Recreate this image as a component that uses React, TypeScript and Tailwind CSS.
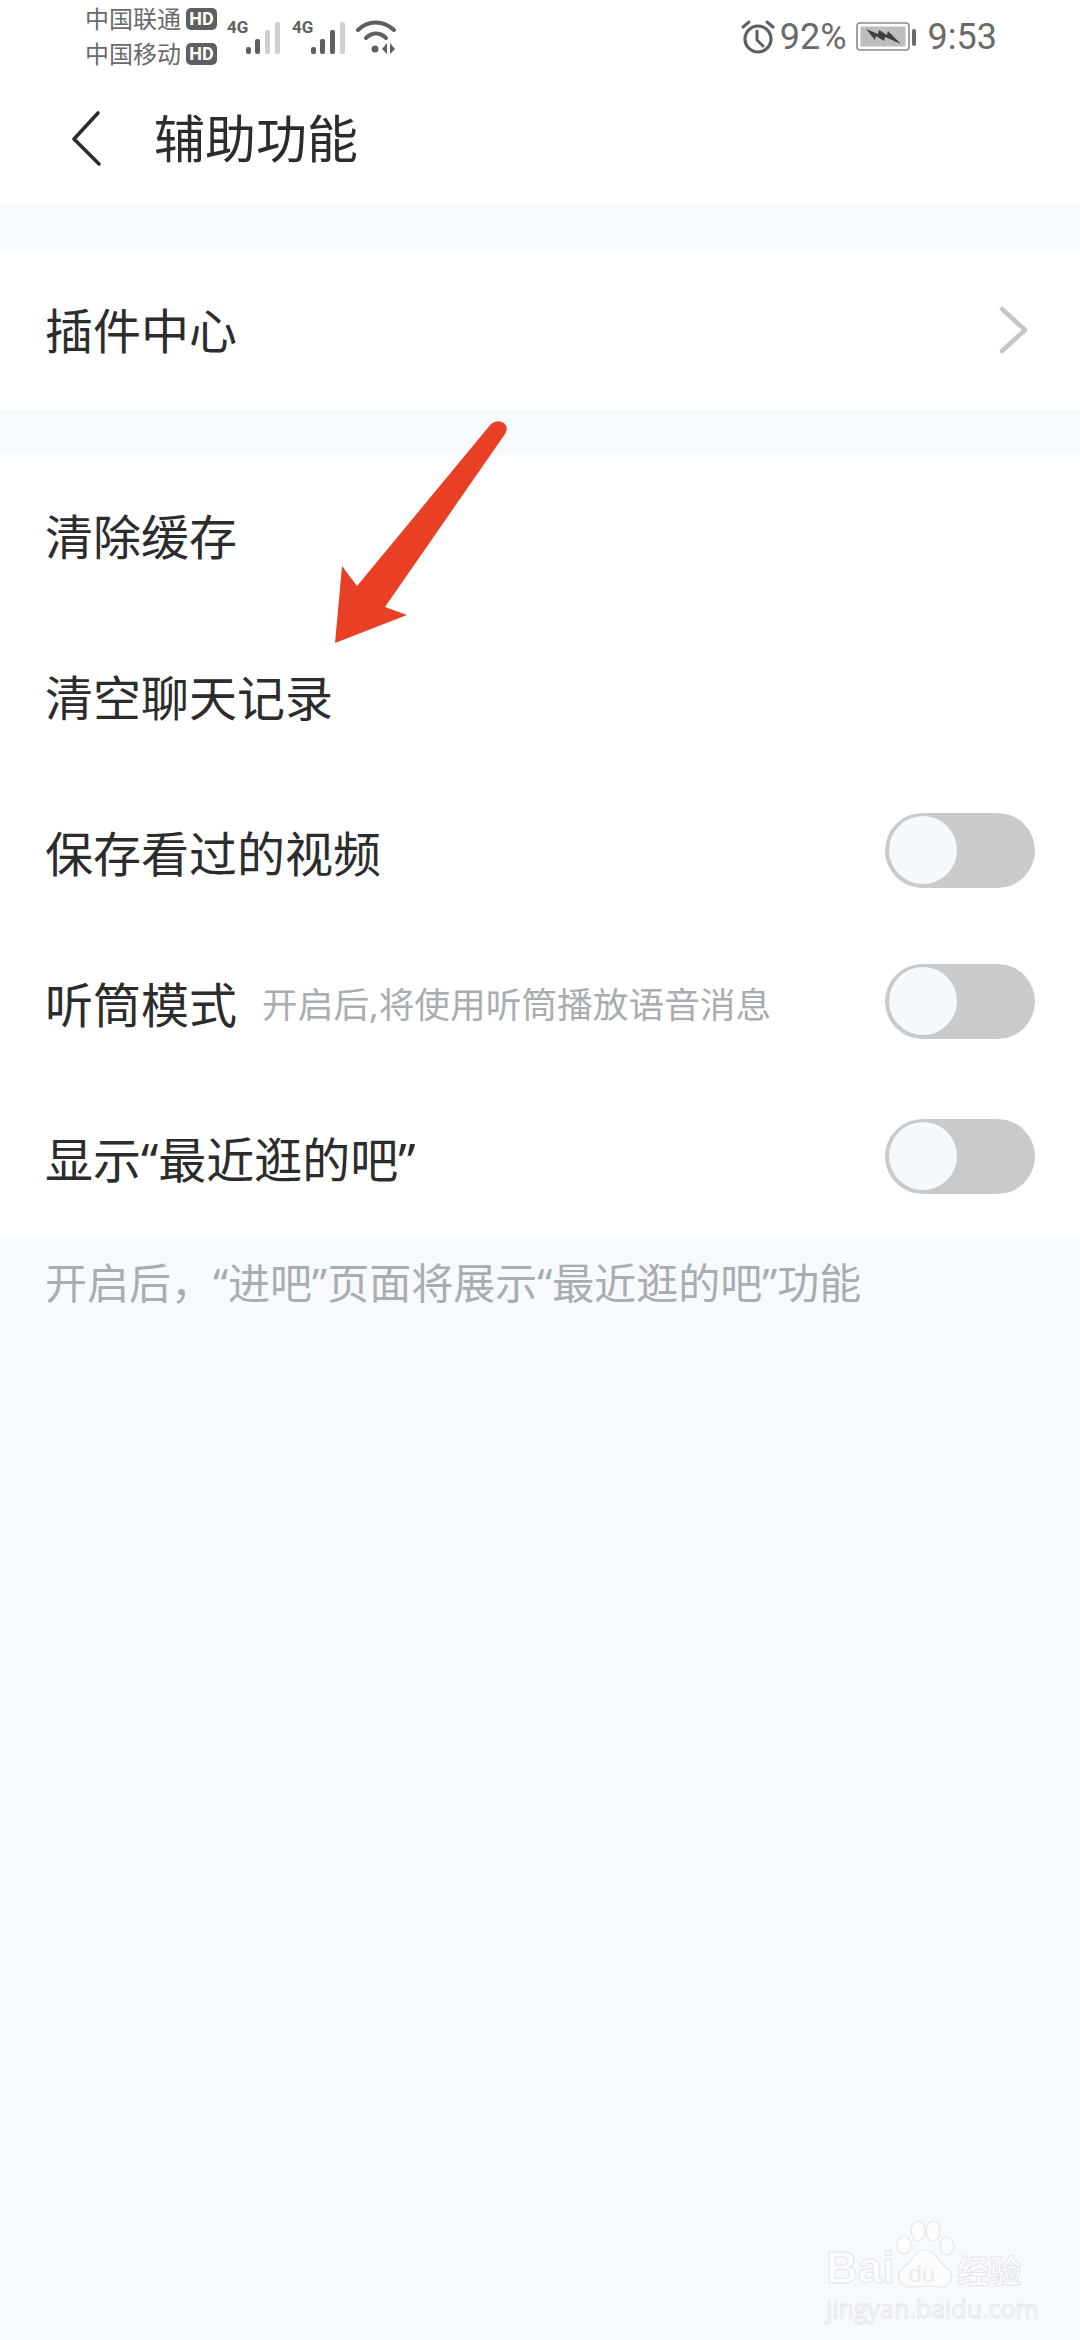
const cjk = "font-['Noto_Sans','Noto_Sans_CJK_SC',sans-serif]";

// --- status bar icons ---

const Signal = ({ active }: { active: number }) => (
  <svg width="36" height="34" viewBox="0 0 36 34" className="block">
    {[
      { x: 1, y: 26, h: 7 },
      { x: 10, y: 18, h: 15 },
      { x: 20, y: 9, h: 24 },
      { x: 30, y: 1, h: 32 },
    ].map((b, i) => (
      <rect key={i} x={b.x} y={b.y} width="5" height={b.h} rx="2" fill={i < active ? "#5f5f5f" : "#cfcfcf"} />
    ))}
  </svg>
);

const Wifi = () => (
  <svg width="40" height="34" viewBox="0 0 40 34" className="block">
    <path d="M2 10C12 0 27 0 38 10" fill="none" stroke="#5f5f5f" strokeWidth="4" strokeLinecap="round" />
    <path d="M10 18C16 12 24 12 30 18" fill="none" stroke="#5f5f5f" strokeWidth="4" strokeLinecap="round" />
    <circle cx="19" cy="29" r="3.5" fill="#5f5f5f" />
    <path d="M31 23l-5 6 5 5zM34 23l5 6-5 5z" fill="#5f5f5f" />
  </svg>
);

const Alarm = () => (
  <svg width="34" height="34" viewBox="0 0 34 34" className="block">
    <circle cx="17" cy="19" r="13" fill="none" stroke="#5f5f5f" strokeWidth="3.2" />
    <path d="M16 11v9l6 6" fill="none" stroke="#5f5f5f" strokeWidth="3" strokeLinecap="round" />
    <path d="M2 7l6-5M32 7l-6-5" fill="none" stroke="#5f5f5f" strokeWidth="3" strokeLinecap="round" />
  </svg>
);

const Battery = () => (
  <svg width="60" height="30" viewBox="0 0 60 30" className="block">
    <rect x="1" y="1" width="52" height="27" rx="3" fill="#fff" stroke="#8a8a8a" strokeWidth="1.6" />
    <rect x="4.5" y="4.5" width="45" height="20" fill="#bdbdbd" />
    <rect x="56" y="7" width="4" height="17" rx="2" fill="#6a6a6a" />
    <path d="M10 7l12 5 1-4 8 5 1-4 13 13-16-7-1 4-8-5-1 4z" fill="#3f3f3f" />
  </svg>
);

const HdBadge = () => (
  <span className="flex h-[22px] w-[31px] shrink-0 items-center justify-center rounded-[5px] bg-[#5f5f5f] font-['Roboto',sans-serif] text-[18px] leading-none font-bold text-white">
    HD
  </span>
);

const FourG = () => (
  <span className="mb-[19px] -mr-[2px] w-[20px] font-['Roboto',sans-serif] text-[17px] leading-none font-bold text-[#5f5f5f]">4G</span>
);

const Toggle = () => (
  <div className="flex h-[75px] w-[150px] items-center rounded-full bg-[#c8cacc] pl-[4px]">
    <div className="h-[68px] w-[68px] rounded-full bg-[#f6f9fc]" />
  </div>
);

const Row = ({ h, label, hint, toggle }: { h: string; label: string; hint?: string; toggle?: boolean }) => (
  <div className={`flex items-center justify-between pl-[45px] pr-[45px] ${h}`}>
    <div className="flex items-center pt-[7px]">
      <span className="text-[48px] leading-none text-[#2c2c2c]">{label}</span>
      {hint && <span className="ml-[25px] text-[35.7px] leading-none text-[#a9adb2]">{hint}</span>}
    </div>
    {toggle && <Toggle />}
  </div>
);

export default function App() {
  return (
    <div className={`relative h-[2340px] w-[1080px] overflow-hidden bg-[#f7fafd] ${cjk}`}>
      {/* header */}
      <div className="h-[204px] bg-white">
        <div className="flex h-[72px] items-start justify-between pt-[6px] pl-[85px] pr-[83px]">
          <div className="flex items-center">
            <div className="flex w-[132px] flex-col gap-[9px] text-[24px] leading-[26px] whitespace-nowrap text-[#6a6a6a]">
              <div className="flex items-center gap-[5px]">中国联通<HdBadge /></div>
              <div className="flex items-center gap-[5px]">中国移动<HdBadge /></div>
            </div>
            <div className="ml-[10px] flex items-end">
              <FourG />
              <Signal active={2} />
            </div>
            <div className="ml-[11px] flex items-end">
              <FourG />
              <Signal active={3} />
            </div>
            <div className="ml-[10px]">
              <Wifi />
            </div>
          </div>
          <div className="flex items-center pt-[13px] font-['Roboto',sans-serif] text-[36px] leading-none text-[#6a6a6a]">
            <Alarm />
            <span className="ml-[5px]">92%</span>
            <span className="ml-[9px]">
              <Battery />
            </span>
            <span className="ml-[12px]">9:53</span>
          </div>
        </div>
        <div className="flex h-[126px] items-start">
          <svg width="40" height="60" viewBox="0 0 40 60" className="mt-[36px] ml-[66px] block">
            <path d="M32 5L8 31l25 25" fill="none" stroke="#2c2c2c" strokeWidth="3.6" strokeLinecap="round" strokeLinejoin="round" />
          </svg>
          <span className="mt-[41px] ml-[48px] text-[51px] leading-none text-[#2c2c2c]">辅助功能</span>
        </div>
      </div>

      <div className="mt-[45px] flex h-[161px] items-center justify-between bg-white pl-[45px] pr-[50px]">
        <span className="pt-[2px] text-[48px] leading-none text-[#2c2c2c]">插件中心</span>
        <svg width="32" height="48" viewBox="0 0 32 48" className="block">
          <path d="M4 3l23 21L4 45" fill="none" stroke="#c2c5c9" strokeWidth="4.5" strokeLinecap="round" strokeLinejoin="round" />
        </svg>
      </div>

      <div className="mt-[45px] bg-white">
        <Row h="h-[156px]" label="清除缓存" />
        <Row h="h-[166px]" label="清空聊天记录" />
        <Row h="h-[146px]" label="保存看过的视频" toggle />
        <Row h="h-[156px]" label="听筒模式" hint="开启后,将使用听筒播放语音消息" toggle />
        <Row h="h-[158px] pb-[4px]" label="显示“最近逛的吧”" toggle />
      </div>

      <p className="mt-[23px] pl-[45px] text-[42px] leading-[46px] whitespace-nowrap text-[#a9adb2]">开启后，“进吧”页面将展示“最近逛的吧”功能</p>

      {/* annotation arrow */}
      <svg width="1080" height="700" viewBox="0 0 1080 700" className="absolute top-0 left-0 block">
        <path
          d="M335 643L342 566L357 586L491 424Q497 419 504 423Q509 428 505 434L385 607L407 615Z"
          fill="#e94025"
        />
      </svg>

      {/* watermark */}
      <div className="absolute top-[2220px] left-[826px] w-[200px]">
        <div className="flex h-[70px] items-end">
          <span className="font-['Liberation_Sans',sans-serif] text-[44px] leading-[44px] font-bold text-[#fbfcfd] [-webkit-text-stroke:1px_#e4e6e9]">Bai</span>
          <div className="relative -mb-[2px] h-[72px] w-[62px]">
            <svg width="62" height="72" viewBox="0 0 62 72" className="absolute top-0 left-0 block">
              <g fill="#fbfcfd" stroke="#e4e6e9" strokeWidth="1.2">
                <ellipse cx="10" cy="25" rx="7" ry="9" />
                <ellipse cx="24" cy="11" rx="7" ry="10" />
                <ellipse cx="39" cy="11" rx="7" ry="10" />
                <ellipse cx="53" cy="26" rx="7" ry="9" />
                <path d="M31 30C20 30 19 42 9 48C0 55 6 68 18 67C26 66 36 66 44 67C57 68 62 55 53 48C43 42 42 30 31 30Z" />
              </g>
            </svg>
            <span className="absolute top-[42px] left-[14px] font-['Liberation_Sans',sans-serif] text-[24px] leading-none text-[#e9ebee]">du</span>
          </div>
          <span className="ml-[1px] text-[32px] leading-[38px] font-bold text-[#fbfcfd] [-webkit-text-stroke:1px_#e4e6e9]">经验</span>
        </div>
        <div className="mt-[4px] font-['Open_Sans',sans-serif] text-[25px] leading-[28px] whitespace-nowrap text-[#fbfcfd] [-webkit-text-stroke:1px_#e4e6e9]">jingyan.baidu.com</div>
      </div>
    </div>
  );
}
